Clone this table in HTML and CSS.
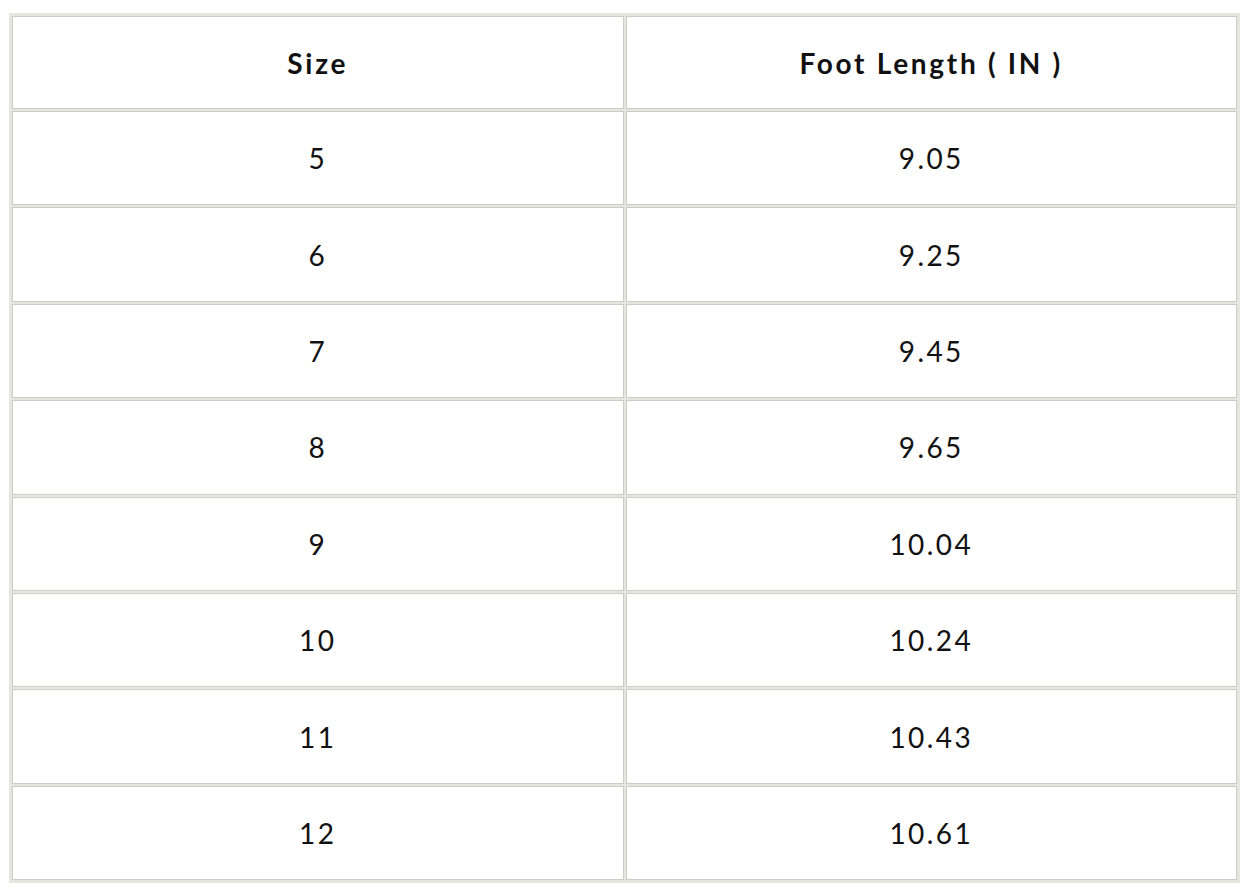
FILE: index.html
```html
<!DOCTYPE html>
<html>
<head>
<meta charset="utf-8">
<link rel="stylesheet" href="styles.css">
</head>
<body>
<table class="size-table">
  <thead>
    <tr><th>Size</th><th>Foot Length ( IN )</th></tr>
  </thead>
  <tbody>
    <tr><td>5</td><td>9.05</td></tr>
    <tr><td>6</td><td>9.25</td></tr>
    <tr><td>7</td><td>9.45</td></tr>
    <tr><td>8</td><td>9.65</td></tr>
    <tr><td>9</td><td>10.04</td></tr>
    <tr><td>10</td><td>10.24</td></tr>
    <tr><td>11</td><td>10.43</td></tr>
    <tr><td>12</td><td>10.61</td></tr>
  </tbody>
</table>
</body>
</html>
```
FILE: styles.css
```css
html, body {
  background: #ffffff;
}
body {
  margin: 13px 8px 8px 9px;
  font-family: "Lato", "Open Sans", sans-serif;
  color: #111;
}
.size-table {
  width: 1231px;
  border-collapse: separate;
  border-spacing: 2px;
  background: #e6e6e1;
  border: 1px solid #e6e6e1;
}
.size-table th,
.size-table td {
  border: 1px solid #cbcbc8;
  background: #fff;
  text-align: center;
  font-size: 28px;
  padding: 0;
}
.size-table th {
  height: 91px;
  font-weight: 700;
  letter-spacing: 2.7px;
}
.size-table td {
  height: 92.4px;
  font-weight: 400;
  letter-spacing: 2.4px;
}
.size-table th:first-child,
.size-table td:first-child {
  width: 50%;
}
```
